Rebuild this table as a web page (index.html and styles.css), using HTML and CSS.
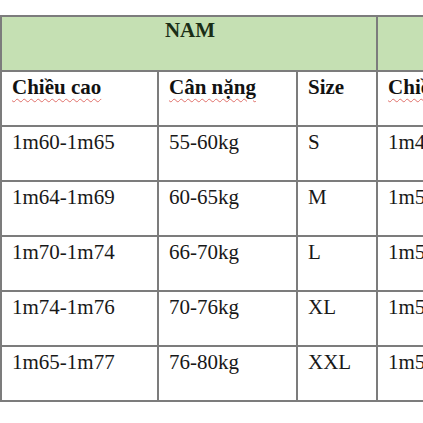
FILE: index.html
```html
<!DOCTYPE html>
<html lang="vi">
<head>
<meta charset="utf-8">
<title>Bảng size</title>
<link rel="stylesheet" href="styles.css">
</head>
<body>
<div class="page">
  <table class="sizes">
    <colgroup>
      <col class="c-h"><col class="c-w"><col class="c-s">
      <col class="c-h"><col class="c-w"><col class="c-s">
    </colgroup>
    <tr class="group">
      <th colspan="3">NAM</th>
      <th colspan="3">NỮ</th>
    </tr>
    <tr class="head">
      <th><span class="spell">Chiều cao</span></th>
      <th><span class="spell">Cân nặng</span></th>
      <th>Size</th>
      <th><span class="spell">Chiều cao</span></th>
      <th><span class="spell">Cân nặng</span></th>
      <th>Size</th>
    </tr>
    <tr><td>1m60-1m65</td><td>55-60kg</td><td>S</td><td>1m45-1m50</td><td>40-45kg</td><td>S</td></tr>
    <tr><td>1m64-1m69</td><td>60-65kg</td><td>M</td><td>1m50-1m55</td><td>45-50kg</td><td>M</td></tr>
    <tr><td>1m70-1m74</td><td>66-70kg</td><td>L</td><td>1m55-1m60</td><td>50-55kg</td><td>L</td></tr>
    <tr><td>1m74-1m76</td><td>70-76kg</td><td>XL</td><td>1m58-1m62</td><td>55-60kg</td><td>XL</td></tr>
    <tr><td>1m65-1m77</td><td>76-80kg</td><td>XXL</td><td>1m55-1m65</td><td>60-65kg</td><td>XXL</td></tr>
  </table>
</div>
</body>
</html>
```

FILE: styles.css
```css
html, body {
  margin: 0;
  padding: 0;
  background: #ffffff;
  overflow: hidden;
}

.page {
  padding-top: 15px;
  width: 423px;
  height: 408px;
  overflow: hidden;
}

.sizes {
  border-collapse: collapse;
  table-layout: fixed;
  width: 752px;
  font-family: "Liberation Serif", "Times New Roman", serif;
  font-size: 21px;
  color: #181818;
}

.c-h { width: 157px; }
.c-w { width: 139px; }
.c-s { width: 80px; }

.sizes th,
.sizes td {
  border: 2px solid #7c7c7c;
  padding: 3px 8px 0 10px;
  text-align: left;
  vertical-align: top;
  line-height: 24px;
  white-space: nowrap;
  overflow: hidden;
}

.sizes tr { height: 55px; }

.group { height: 54px; }

.group th {
  background: #c5e0b3;
  text-align: center;
  color: #1a2e16;
  font-weight: bold;
  padding-top: 1px;
}

.head th {
  font-weight: bold;
  color: #121212;
}

.spell {
  text-decoration: underline wavy #e0706a;
  text-decoration-thickness: 1px;
  text-underline-offset: 4px;
}
```
